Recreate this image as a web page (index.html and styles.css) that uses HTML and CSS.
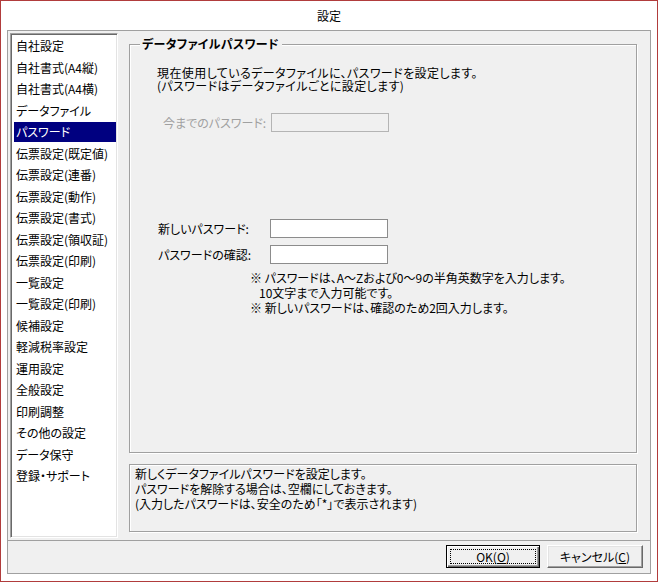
FILE: index.html
```html
<!DOCTYPE html>
<html lang="ja">
<head>
<meta charset="utf-8">
<title>設定</title>
<link rel="stylesheet" href="styles.css">
</head>
<body>
<div class="window">
  <div class="titlebar">設定</div>
  <div class="frame">
    <div class="top">
      <ul class="list">
        <li>自社設定</li>
        <li>自社書式(A4縦)</li>
        <li>自社書式(A4横)</li>
        <li>データファイル</li>
        <li class="sel"><span>パスワード</span></li>
        <li>伝票設定(既定値)</li>
        <li>伝票設定(連番)</li>
        <li>伝票設定(動作)</li>
        <li>伝票設定(書式)</li>
        <li>伝票設定(領収証)</li>
        <li>伝票設定(印刷)</li>
        <li>一覧設定</li>
        <li>一覧設定(印刷)</li>
        <li>候補設定</li>
        <li>軽減税率設定</li>
        <li>運用設定</li>
        <li>全般設定</li>
        <li>印刷調整</li>
        <li>その他の設定</li>
        <li>データ保守</li>
        <li>登録・サポート</li>
      </ul>
      <div class="main">
        <div class="group">
          <div class="legend">データファイルパスワード</div>
          <p class="intro">現在使用しているデータファイルに、パスワードを設定します。<br>(パスワードはデータファイルごとに設定します)</p>
          <div class="row old">
            <span class="label">今までのパスワード:</span>
            <span class="input disabled"></span>
          </div>
          <div class="row new">
            <span class="label">新しいパスワード:</span>
            <span class="input"></span>
          </div>
          <div class="row confirm">
            <span class="label">パスワードの確認:</span>
            <span class="input"></span>
          </div>
          <div class="notes">
            <div>※ パスワードは、A～Zおよび0～9の半角英数字を入力します。</div>
            <div class="indent">10文字まで入力可能です。</div>
            <div>※ 新しいパスワードは、確認のため2回入力します。</div>
          </div>
        </div>
        <div class="info">新しくデータファイルパスワードを設定します。<br>パスワードを解除する場合は、空欄にしておきます。<br>(入力したパスワードは、安全のため「*」で表示されます)</div>
      </div>
    </div>
    <div class="bottom">
      <button class="btn default" type="button"><span class="focus">OK(<u>O</u>)</span></button>
      <button class="btn cancel" type="button"><span class="cap">キャンセル(<u>C</u>)</span></button>
    </div>
  </div>
</div>
</body>
</html>
```
FILE: styles.css
```css
* {
  box-sizing: border-box;
  margin: 0;
  padding: 0;
}

html, body {
  width: 658px;
  height: 582px;
  overflow: hidden;
}

body {
  font-family: "Noto Sans CJK JP", "Noto Sans", sans-serif;
  font-size: 12px;
  color: #000;
  font-feature-settings: "palt";
}

.window {
  width: 658px;
  height: 582px;
  border: 1px solid #b13c3c;
  background: #fff;
  display: flex;
  flex-direction: column;
  padding: 0 6px 7px 6px;
}

.titlebar {
  height: 29px;
  line-height: 29px;
  text-align: center;
  flex: none;
}

.frame {
  flex: 1;
  border: 1px solid #a0a0a0;
  background: #f0f0f0;
  display: flex;
  flex-direction: column;
}

.top {
  height: 510px;
  flex: none;
  display: flex;
  padding: 2px;
  border-bottom: 1px solid #a0a0a0;
}

.list {
  width: 108px;
  height: 505px;
  flex: none;
  list-style: none;
  background: #fff;
  border: 1px solid;
  border-color: #a0a0a0 #fff #fff #a0a0a0;
  box-shadow: inset 1px 1px 0 #696969, inset -1px -1px 0 #e3e3e3;
  padding: 1px;
}

.list li {
  height: 21.5px;
  line-height: 21.5px;
  padding-left: 4px;
  white-space: nowrap;
}

.list li.sel {
  padding: 1px 0 1px 2px;
}

.list li.sel span {
  display: block;
  height: 19.5px;
  line-height: 19.5px;
  background: #000080;
  color: #fff;
  padding-left: 2px;
}

.main {
  margin-left: 11px;
  margin-top: 11px;
  width: 508px;
  flex: none;
  display: flex;
  flex-direction: column;
}

.group {
  position: relative;
  height: 409px;
  border: 1px solid #a0a0a0;
  box-shadow: 1px 1px 0 #fff, inset 1px 1px 0 #fff;
}

.legend {
  position: absolute;
  left: 10px;
  top: -8px;
  line-height: 14px;
  padding: 0 3px 0 2px;
  background: #f0f0f0;
  font-weight: bold;
  white-space: nowrap;
  letter-spacing: 0.3px;
}

.intro {
  margin: 21px 0 0 27px;
  line-height: 13px;
  white-space: nowrap;
  letter-spacing: 0.4px;
}

.row {
  display: flex;
  align-items: center;
  height: 19px;
}

.row .label {
  flex: none;
  white-space: nowrap;
}

.row.old {
  margin-top: 21px;
  padding-left: 33px;
}

.row.old .label {
  width: 108px;
  color: #a0a0a0;
}

.row.new {
  margin-top: 87px;
  padding-left: 28px;
}

.row.confirm {
  margin-top: 7px;
  padding-left: 28px;
}

.row.new .label,
.row.confirm .label {
  width: 112px;
}

.input {
  width: 118px;
  height: 19px;
  flex: none;
  border: 1px solid #8c8c8c;
  background: #fff;
}

.input.disabled {
  border-color: #b4b4b4;
  background: #f0f0f0;
}

.notes {
  margin-top: 6px;
  padding-left: 120px;
  line-height: 15px;
  white-space: nowrap;
}

.notes .indent {
  padding-left: 9px;
}

.info {
  margin-top: 11px;
  height: 68px;
  border: 1px solid #a0a0a0;
  box-shadow: 1px 1px 0 #fff, inset 1px 1px 0 #fff;
  padding: 1px 0 0 5px;
  line-height: 15px;
  white-space: nowrap;
}

.bottom {
  flex: 1;
  display: flex;
  justify-content: flex-end;
  align-items: flex-start;
  gap: 7px;
  padding: 4px 7px 0 0;
}

.btn {
  height: 23px;
  font: inherit;
  color: #000;
  background: #f0f0f0;
  display: flex;
  align-items: stretch;
  padding: 0;
  flex: none;
}

.btn u {
  text-decoration: underline;
  text-underline-offset: 1px;
}

.btn.default {
  width: 94px;
  border: 1px solid #000;
  box-shadow: inset 1px 1px 0 #fff, inset -1px -1px 0 #696969, inset -2px -2px 0 #a0a0a0;
}

.btn.cancel {
  width: 96px;
  border: 1px solid;
  border-color: #fff #696969 #696969 #fff;
  box-shadow: inset -1px -1px 0 #a0a0a0, inset 1px 1px 0 #e3e3e3;
}

.focus {
  flex: 1;
  margin: 3px;
  border: 1px dotted #000;
  display: flex;
  align-items: center;
  justify-content: center;
  line-height: 13px;
}

.cap {
  flex: 1;
  display: flex;
  align-items: center;
  justify-content: center;
  line-height: 13px;
}
```
